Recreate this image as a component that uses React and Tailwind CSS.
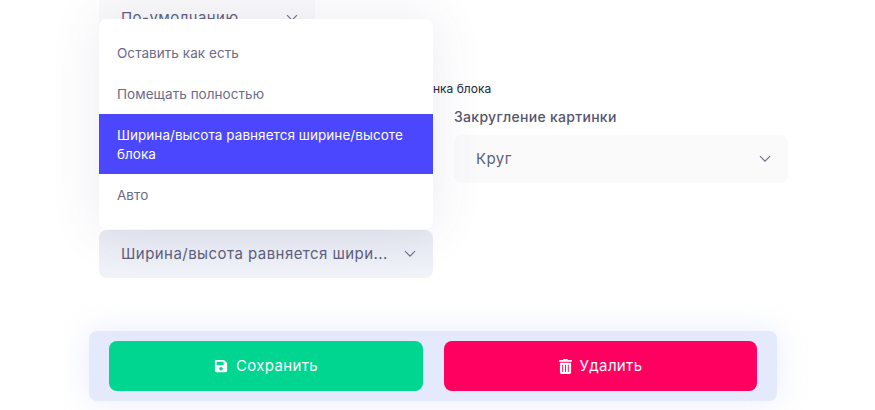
import React from "react";
import { FaSave, FaTrashAlt } from "react-icons/fa";

const font = "font-['Inter','Noto_Sans',sans-serif]";

function Chevron({ className }) {
  return (
    <svg viewBox="0 0 12 8" className={"w-[12px] h-[8px] " + className} fill="none" stroke="currentColor" strokeWidth="1.2">
      <path d="M1 1.2 L6 6.2 L11 1.2" />
    </svg>
  );
}

function Select({ label, className = "", boxClass = "bg-[#fafafb]" }) {
  return (
    <div className={"h-12 rounded-lg flex items-center justify-between pl-[22px] pr-[17px] " + boxClass + " " + className}>
      <span className="text-[15px] leading-[22px] tracking-[0.45px] text-[#5e5e7c] whitespace-nowrap">{label}</span>
      <Chevron className="text-[#72728e]" />
    </div>
  );
}

const rows = [
  { t: "Оставить как есть", h: "h-[41px]" },
  { t: "Помещать полностью", h: "h-[40px]" },
  { t: "Ширина/высота равняется ширине/высоте блока", active: true },
  { t: "Авто", h: "h-[42px]" },
];

export default function App() {
  return (
    <div className={"relative w-[875px] h-[410px] overflow-hidden bg-white " + font}>
      <div className="pl-[99px] pr-[87px]">
        <Select label="По-умолчанию" className="w-[216px] -mt-[6px]" />

        <div className="mt-[38px] pl-[299px] text-[12px] leading-[18px] text-[#24243a] whitespace-nowrap h-[18px]">
          Картинка блока
        </div>

        <div className="grid grid-cols-[334px_334px] gap-x-[21px] mt-[12px]">
          <div className="pt-[120px]">
            <Select
              label="Ширина/высота равняется шири..."
              boxClass="bg-linear-to-b from-[#e7eaf2] to-[#f0f3f8]"
            />
          </div>
          <div>
            <div className="text-[14px] leading-[22px] tracking-[0.3px] font-medium text-[#55556f] h-[22px] mt-[-4px] mb-[7px]">
              Закругление картинки
            </div>
            <Select label="Круг" />
          </div>
        </div>
      </div>

      <div className="ml-[89px] mt-[53px] w-[688px] h-[70px] rounded-lg bg-[#e4eafb] py-[10px] px-[20px] flex gap-[21px] shadow-[0_0_30px_rgba(180,195,250,0.3)]">
        <button className="w-[314px] h-[50px] rounded-lg bg-[#00d68f] text-white flex items-center justify-center gap-[8px] text-[15px] tracking-[0.35px]">
          <FaSave className="w-[14px] h-[14px]" />
          Сохранить
        </button>
        <button className="w-[313px] h-[50px] rounded-lg bg-[#ff0061] text-white flex items-center justify-center gap-[8px] text-[15px] tracking-[0.35px]">
          <FaTrashAlt className="w-[13px] h-[15px]" />
          Удалить
        </button>
      </div>

      <div className="absolute left-[99px] top-[19px] w-[334px] h-[210px] rounded-lg bg-white pt-[14px] overflow-hidden shadow-[0_0_50px_rgba(90,70,130,0.12)]">
        {rows.map((r) =>
          r.active ? (
            <div key={r.t} className="bg-[#4b47ff] text-white h-[60px] px-[18px] py-[12px] text-[13.5px] leading-[19px] tracking-[0.05px]">
              {r.t}
            </div>
          ) : (
            <div key={r.t} className={"px-[18px] flex items-center text-[13.5px] tracking-[0.05px] text-[#6b6b88] " + r.h}>
              {r.t}
            </div>
          )
        )}
      </div>
    </div>
  );
}
